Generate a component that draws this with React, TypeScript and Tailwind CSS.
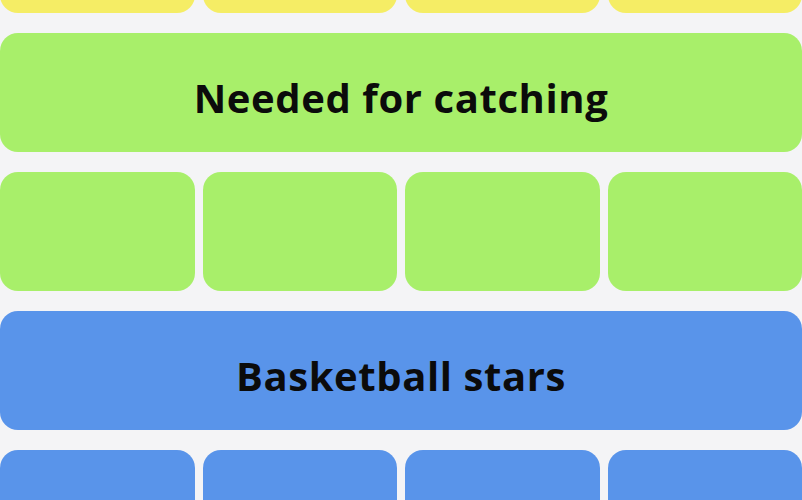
function TileRow({ color }: { color: string }) {
  return (
    <div className="grid grid-cols-4 gap-2">
      {[0, 1, 2, 3].map((i) => (
        <div key={i} className={`h-[119.5px] rounded-[18px] ${color}`} />
      ))}
    </div>
  );
}

function Banner({ label, color }: { label: string; color: string }) {
  return (
    <div
      className={`flex h-[119.5px] items-center justify-center rounded-[18px] pt-[12px] ${color}`}
    >
      <span className="text-[40px] leading-none font-bold tracking-[0.6px] text-[#0b0b0b]">
        {label}
      </span>
    </div>
  );
}

export default function App() {
  return (
    <div
      className="h-[500px] w-[802px] overflow-hidden bg-[#f4f4f6]"
      style={{ fontFamily: "'Open Sans', 'Noto Sans', sans-serif" }}
    >
      <div className="-mt-[106.5px] flex flex-col gap-[19.5px]">
        <TileRow color="bg-[#f5ed65]" />
        <Banner label="Needed for catching" color="bg-[#a8ef6a]" />
        <TileRow color="bg-[#a8ef6a]" />
        <Banner label="Basketball stars" color="bg-[#5994ea]" />
        <TileRow color="bg-[#5994ea]" />
      </div>
    </div>
  );
}
